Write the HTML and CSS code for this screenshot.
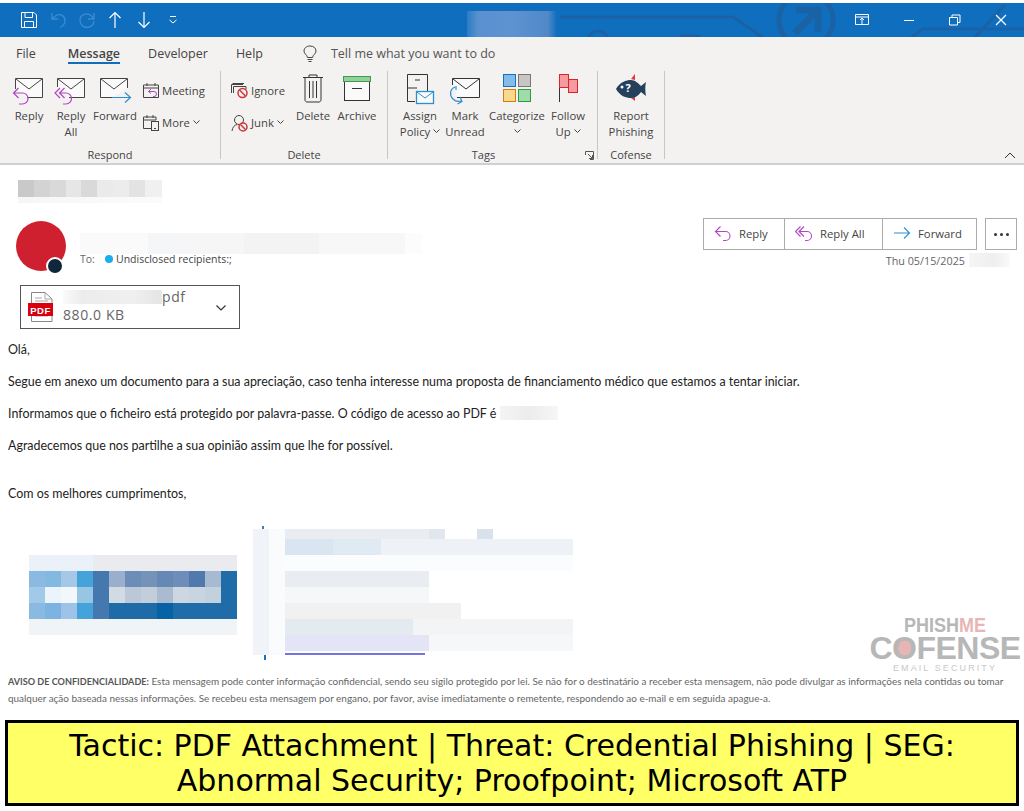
FILE: index.html
```html
<!DOCTYPE html>
<html lang="en">
<head>
    <meta charset="UTF-8">
    <meta name="viewport" content="width=device-width, initial-scale=1.0">
    <title>Message</title>
    <link rel="stylesheet" href="styles.css">
</head>
<body>

<header class="titlebar">
    <svg class="titlebar-art" width="1024" height="34" viewBox="0 0 1024 34" fill="none" stroke="#1a62a6">
        <path d="M560 14H733L765 36" stroke-width="3"/>
        <path d="M680 33H700" stroke-width="3"/>
        <circle cx="806" cy="17" r="27" stroke-width="5"/>
        <path d="M796 7H818V29M816 9L795 30" stroke-width="7"/>
        <path d="M910 36L922 26H1024M975 34L1005 2" stroke-width="3"/>
        <circle cx="598" cy="38" r="10" stroke-width="3"/>
    </svg>
    <div class="qat">
        <svg width="18" height="18" viewBox="0 0 18 18" fill="none" stroke="#fff"><path d="M1.500 1.500H14L16.500 4V16.500H1.500ZM5 1.500V6.500H12.500V1.500M4.500 16.500V10.500H13.500V16.500"/></svg>
        <svg class="qat-undo" width="16" height="18" viewBox="0 0 16 18" fill="none" stroke="#3d8bd0" stroke-width="1.300"><path d="M1 2V8H7M1.500 7.500L5 4.500C9 2 14 5 14 9.500C14 13 12 15 9 16.500"/></svg>
        <svg class="qat-redo" width="18" height="18" viewBox="0 0 18 18" fill="none" stroke="#3d8bd0" stroke-width="1.300"><path d="M16 2V8H10M15.500 7L13 4.500C9 1 2 3.500 2 9.500C2 13.500 5 16.500 9 16.500C13 16.500 16 13.500 16 10"/></svg>
        <svg class="qat-up" width="14" height="18" viewBox="0 0 14 18" fill="none" stroke="#fff" stroke-width="1.200"><path d="M7 17V1.500M1.500 7L7 1.500L12.500 7"/></svg>
        <svg class="qat-down" width="14" height="18" viewBox="0 0 14 18" fill="none" stroke="#fff" stroke-width="1.200"><path d="M7 1V16.500M1.500 11L7 16.500L12.500 11"/></svg>
        <svg class="qat-more" width="10" height="10" viewBox="0 0 10 10" fill="none" stroke="#fff"><path d="M2 1.500H8M1.500 5L5 8L8.500 5"/></svg>
    </div>
    <div class="doc-title"></div>
    <div class="window-controls">
        <svg width="14" height="12" viewBox="0 0 14 12" fill="none" stroke="#fff"><path d="M.5 .5H13.500V10.500H.5ZM.5 3H13.500M7 4V10.500M5 6L7 4L9 6"/></svg>
        <svg width="12" height="12" viewBox="0 0 12 12" fill="none" stroke="#fff"><path d="M1 6.500H11"/></svg>
        <svg width="12" height="12" viewBox="0 0 12 12" fill="none" stroke="#fff"><path d="M.5 3.500H8.500V11H.5ZM3 3.500V1H11V8.500H8.500"/></svg>
        <svg width="12" height="12" viewBox="0 0 12 12" fill="none" stroke="#fff" stroke-width="1.200"><path d="M1 1L11 11M11 1L1 11"/></svg>
    </div>
</header>

<nav class="tabs">
    <span class="tab tab-file">File</span>
    <span class="tab tab-active">Message</span>
    <span class="tab tab-dev">Developer</span>
    <span class="tab tab-help">Help</span>
    <svg class="bulb" width="16" height="18" viewBox="0 0 16 18" fill="none" stroke="#444"><path d="M5.500 12.500C5 9.500 2 9 2 6C2 3 4.500 1 8 1C11.500 1 14 3 14 6C14 9 11 9.500 10.500 12.500ZM5.500 14.500H10.500M6.500 16.500H9.500"/></svg>
    <span class="tell-me">Tell me what you want to do</span>
</nav>

<section class="ribbon">
    <div class="group group-respond">
        <div class="group-body">
            <div class="rb rb-reply">
                <svg width="36" height="36" viewBox="0 0 36 36" fill="none"><path d="M4.500 18V7.500H31.500V26.500H16" fill="#fafafa" stroke="#444"/><path d="M5 8L18 18L31 8" stroke="#444"/><path d="M7.500 17L2.500 22L7.500 27M2.500 22H11.500A5.500 5.500 0 0 1 11.500 33H8" stroke="#b146c2" stroke-width="1.200"/></svg>
                <span>Reply</span>
            </div>
            <div class="rb rb-reply">
                <svg width="36" height="36" viewBox="0 0 36 36" fill="none"><path d="M4.500 16V7.500H31.500V26.500H16" fill="#fafafa" stroke="#444"/><path d="M5 8L18 18L31 8" stroke="#444"/><path d="M7 17L2 22L7 27M11.500 17L6.500 22L11.500 27M6.500 22H13A5.500 5.500 0 0 1 13 33H10" stroke="#b146c2" stroke-width="1.200"/></svg>
                <span>Reply<br>All</span>
            </div>
            <div class="rb rb-forward">
                <svg width="38" height="36" viewBox="0 0 38 36" fill="none"><path d="M31.500 17V7.500H4.500V26.500H16" fill="#fafafa" stroke="#444"/><path d="M5 8L18 18L31 8" stroke="#444"/><path d="M16 26.500H34M29 21.500L34.500 26.500L29 31.500" stroke="#2f8ed0" stroke-width="1.200"/></svg>
                <span>Forward</span>
            </div>
            <div class="small-col small-col-respond">
                <div class="rb-small">
                    <svg width="17" height="17" viewBox="0 0 17 17" fill="none"><path d="M.5 3H15.500V15.500H.5ZM.5 6H15.500M4 1V4M12 1V4" stroke="#444"/><path d="M8 7L5.500 9.500L8 11.500M5.500 9.500H11A2.500 2.500 0 0 1 11 14.500H10" stroke="#b146c2"/></svg>
                    <span>Meeting</span>
                </div>
                <div class="rb-small">
                    <svg width="17" height="17" viewBox="0 0 17 17" fill="none"><path d="M8 14.500H.5V3H13V6M.5 6H13M4 1V4M10 1V4" stroke="#444"/><rect x="8.500" y="7.500" width="7" height="9" fill="#f3f2f1" stroke="#444"/><path d="M11 14.500H13" stroke="#444"/></svg>
                    <span>More <svg class="chev" width="7" height="5" viewBox="0 0 7 5" fill="none"><path d="M.5 .5L3.500 3.500L6.500 .5"/></svg></span>
                </div>
            </div>
        </div>
        <div class="group-label">Respond</div>
    </div>

    <div class="group group-delete">
        <div class="group-body">
            <div class="small-col small-col-delete">
                <div class="rb-small">
                    <svg width="18" height="17" viewBox="0 0 18 17" fill="none"><path d="M.5 11V2.500H12M2.500 11V4.500H15V7" stroke="#444"/><path d="M1.500 1.500H13" stroke="#444"/><circle cx="11.500" cy="11" r="4.500" fill="#f3f2f1" stroke="#d13438" stroke-width="1.500"/><path d="M8.500 8L14.500 14" stroke="#d13438" stroke-width="1.500"/></svg>
                    <span>Ignore</span>
                </div>
                <div class="rb-small">
                    <svg width="18" height="18" viewBox="0 0 18 18" fill="none"><circle cx="8" cy="6" r="4.500" stroke="#444"/><path d="M1 17C1.500 13 3.500 11 6 10.500" stroke="#444"/><circle cx="12" cy="13" r="4" fill="#f3f2f1" stroke="#d13438" stroke-width="1.500"/><path d="M9.500 10.500L14.500 15.500" stroke="#d13438" stroke-width="1.500"/></svg>
                    <span>Junk <svg class="chev" width="7" height="5" viewBox="0 0 7 5" fill="none"><path d="M.5 .5L3.500 3.500L6.500 .5"/></svg></span>
                </div>
            </div>
            <div class="rb rb-delete">
                <svg width="24" height="36" viewBox="0 0 24 36" fill="none" stroke="#333"><path d="M2 6.500H22M8 6.500V4H16V6.500M4 6.500V29C4 30 5 31 6 31H18C19 31 20 30 20 29V6.500M8.500 10V27M12 10V27M15.500 10V27"/></svg>
                <span>Delete</span>
            </div>
            <div class="rb rb-archive">
                <svg width="30" height="36" viewBox="0 0 30 36" fill="none"><rect x="2.500" y="9.500" width="25" height="20" fill="#fafafa" stroke="#333"/><rect x="1.500" y="5.500" width="27" height="5" fill="#92d29a" stroke="#3f9a4f"/><path d="M10 17.500H20" stroke="#333"/></svg>
                <span>Archive</span>
            </div>
        </div>
        <div class="group-label">Delete</div>
    </div>

    <div class="group group-tags">
        <div class="group-body">
            <div class="rb rb-assign">
                <svg width="30" height="36" viewBox="0 0 30 36" fill="none"><path d="M2.500 3.500H22.500V21M2.500 3.500V30.500H10M2.500 17H12M10 9H15" stroke="#333"/><rect x="11.500" y="20.500" width="17" height="12" fill="#fafafa" stroke="#2f8ed0" stroke-width="1.300"/><path d="M12 21L20 27L28 21" stroke="#2f8ed0"/></svg>
                <span>Assign<br>Policy <svg class="chev" width="7" height="5" viewBox="0 0 7 5" fill="none"><path d="M.5 .5L3.500 3.500L6.500 .5"/></svg></span>
            </div>
            <div class="rb rb-mark">
                <svg width="36" height="36" viewBox="0 0 36 36" fill="none"><path d="M5.500 7.500H32.500V26.500H10" fill="#fafafa" stroke="#333"/><path d="M5.500 7.500V14M6 8L19 18L32 8" stroke="#333"/><path d="M8 16C3 18 2 24 6 28C8 30 11 31 14 30M13 26L15 30.500L10.500 33M9 15V19" stroke="#2f8ed0" stroke-width="1.200"/></svg>
                <span>Mark<br>Unread</span>
            </div>
            <div class="rb rb-cat">
                <svg width="30" height="36" viewBox="0 0 30 36" fill="none"><rect x="1.500" y="3.500" width="12" height="12" fill="#83bbe9" stroke="#1a6fc0"/><rect x="16.500" y="3.500" width="12" height="12" fill="#c8c6c4" stroke="#797775"/><rect x="1.500" y="18.500" width="12" height="12" fill="#f9d98b" stroke="#d97c10"/><rect x="16.500" y="18.500" width="12" height="12" fill="#9fdca8" stroke="#2b9a45"/></svg>
                <span>Categorize<br><svg class="chev" width="7" height="5" viewBox="0 0 7 5" fill="none"><path d="M.5 .5L3.500 3.500L6.500 .5"/></svg></span>
            </div>
            <div class="rb rb-follow">
                <svg width="24" height="36" viewBox="0 0 24 36" fill="none"><path d="M3.500 3.500V31" stroke="#333"/><rect x="3.500" y="3.500" width="9" height="13" fill="#f79aa0" stroke="#d9242c"/><rect x="12.500" y="8.500" width="9" height="13" fill="#f79aa0" stroke="#d9242c"/></svg>
                <span>Follow<br>Up <svg class="chev" width="7" height="5" viewBox="0 0 7 5" fill="none"><path d="M.5 .5L3.500 3.500L6.500 .5"/></svg></span>
            </div>
        </div>
        <div class="group-label group-label-tags">Tags</div>
        <svg class="launcher" width="9" height="9" viewBox="0 0 9 9" fill="none" stroke="#555"><path d="M.5 4V.5H8.500V8.500H5M3 3L7.500 7.500M7.500 4V7.500H4"/></svg>
    </div>

    <div class="group group-cofense">
        <div class="group-body">
            <div class="rb rb-report">
                <svg width="36" height="36" viewBox="0 0 36 36">
                    <path d="M18 8L22 3L22 9Z" fill="#e8343c"/>
                    <path d="M18 27L22 30L22 26Z" fill="#e8343c"/>
                    <path d="M3 18C7 11 13 9 18 9C22 9 25 12 28 15L33 11C32 15 32 20 33 25L28 21C25 25 22 27 18 27C13 27 7 25 3 18Z" fill="#25405c"/>
                    <circle cx="9" cy="16" r="1.500" fill="#fff"/>
                    <text class="fish-mark" x="15" y="21">?</text>
                </svg>
                <span>Report<br>Phishing</span>
            </div>
        </div>
        <div class="group-label">Cofense</div>
    </div>

    <svg class="collapse" width="12" height="7" viewBox="0 0 12 7" fill="none" stroke="#333"><path d="M1 6L6 1L11 6"/></svg>
</section>

<main class="message">
    <div class="subject-blur"></div>

    <div class="sender-row">
        <div class="avatar"><span class="presence"></span></div>
        <div class="sender-info">
            <div class="sender-blur"></div>
            <div class="to-line">
                <span class="to-label">To:</span>
                <span class="to-dot"></span>
                <span>Undisclosed recipients:;</span>
            </div>
        </div>
        <div class="actions">
            <div class="action-row">
                <div class="action-group">
                    <span class="action action-reply">
                        <svg width="18" height="18" viewBox="0 0 18 18" fill="none" stroke="#b146c2" stroke-width="1.100"><path d="M6.500 2.500L1.500 7.500L6.500 12.500M1.500 7.500H11.500A4.500 4.500 0 0 1 11.500 16.500H9"/></svg>
                        Reply
                    </span>
                    <span class="action action-replyall">
                        <svg width="18" height="18" viewBox="0 0 18 18" fill="none" stroke="#b146c2" stroke-width="1.100"><path d="M5.500 2.500L.5 7.500L5.500 12.500M9 2.500L4 7.500L9 12.500M4 7.500H12A4.500 4.500 0 0 1 12 16.500H10"/></svg>
                        Reply All
                    </span>
                    <span class="action action-forward">
                        <svg width="18" height="18" viewBox="0 0 18 18" fill="none" stroke="#2f8ed0" stroke-width="1.100"><path d="M1 9H16.500M11 3.500L16.500 9L11 14.500"/></svg>
                        Forward
                    </span>
                </div>
                <span class="more-btn"><i></i><i></i><i></i></span>
            </div>
            <div class="date-line">Thu 05/15/2025 <span class="time-blur"></span></div>
        </div>
    </div>

    <div class="attachment">
        <svg class="pdf-icon" width="26" height="30" viewBox="0 0 26 30" fill="none">
            <path d="M3.500 .5H17L24 7V29.500H3.500Z" fill="#fff" stroke="#8a8886"/>
            <path d="M17 .5V7H24M7 6H14M7 9H20M7 21H20M7 24H20" stroke="#a8a6a4"/>
            <rect y="11" width="25" height="13" fill="#d8000f"/>
            <text class="pdf-mark" x="12.500" y="21.500">PDF</text>
        </svg>
        <div class="attachment-text">
            <div class="attachment-name"><span class="name-blur"></span>pdf</div>
            <div class="attachment-size">880.0 KB</div>
        </div>
        <svg class="attachment-chev" width="10" height="6" viewBox="0 0 10 6" fill="none" stroke="#333" stroke-width="1.200"><path d="M.5 .5L5 5L9.500 .5"/></svg>
    </div>

    <div class="body-text">
        <p>Olá,</p>
        <p>Segue em anexo um documento para a sua apreciação, caso tenha interesse numa proposta de financiamento médico que estamos a tentar iniciar.</p>
        <p>Informamos que o ficheiro está protegido por palavra-passe. O código de acesso ao PDF é <span class="code-blur"></span></p>
        <p>Agradecemos que nos partilhe a sua opinião assim que lhe for possível.</p>
        <p class="closing">Com os melhores cumprimentos,</p>
    </div>

    <div class="signature">
        <svg class="sig-logo" width="208" height="80" viewBox="0 0 208 80" shape-rendering="crispEdges">
            <rect width="208" height="16" fill="#e9ebef"/>
            <rect width="64" height="16" fill="#ebf1f8"/>
            <rect y="16" width="16" height="16" fill="#8abae2"/><rect x="16" y="16" width="16" height="16" fill="#83b8e0"/><rect x="32" y="16" width="16" height="16" fill="#a4c8e5"/><rect x="48" y="16" width="16" height="16" fill="#44a3da"/><rect x="64" y="16" width="16" height="48" fill="#4578ae"/><rect x="80" y="16" width="16" height="16" fill="#9aafcb"/><rect x="96" y="16" width="16" height="16" fill="#6c8db8"/><rect x="112" y="16" width="16" height="16" fill="#7592b9"/><rect x="128" y="16" width="16" height="16" fill="#6588b5"/><rect x="144" y="16" width="16" height="16" fill="#6e8db8"/><rect x="160" y="16" width="16" height="16" fill="#5079ae"/><rect x="176" y="16" width="16" height="16" fill="#a8bad1"/><rect x="192" y="16" width="16" height="48" fill="#1f6ca8"/>
            <rect y="32" width="16" height="16" fill="#a2c9e8"/><rect x="16" y="32" width="16" height="16" fill="#ecf4fb"/><rect x="32" y="32" width="16" height="16" fill="#f3f7fb"/><rect x="48" y="32" width="16" height="16" fill="#98c5e4"/><rect x="80" y="32" width="16" height="16" fill="#d2dae4"/><rect x="96" y="32" width="16" height="16" fill="#bcc8d8"/><rect x="112" y="32" width="16" height="16" fill="#c2ced9"/><rect x="128" y="32" width="16" height="16" fill="#aabbd1"/><rect x="144" y="32" width="16" height="16" fill="#cdd7e1"/><rect x="160" y="32" width="16" height="16" fill="#c8d4df"/><rect x="176" y="32" width="16" height="16" fill="#c3d0dd"/>
            <rect y="48" width="16" height="16" fill="#8abae2"/><rect x="16" y="48" width="16" height="16" fill="#7bb4e0"/><rect x="32" y="48" width="16" height="16" fill="#9dc3e6"/><rect x="48" y="48" width="16" height="16" fill="#44a3da"/><rect x="80" y="48" width="48" height="16" fill="#1f6ba8"/><rect x="128" y="48" width="16" height="16" fill="#0562a4"/><rect x="144" y="48" width="48" height="16" fill="#1f6ca8"/>
            <rect y="64" width="208" height="16" fill="#f1f4f7"/>
        </svg>
        <svg class="sig-card" width="320" height="134" viewBox="0 0 320 134" shape-rendering="crispEdges">
            <rect x="9" y="0" width="2" height="5" fill="#3b7cc0"/>
            <rect x="0" y="3" width="16" height="126" fill="#f0f3f8"/><rect x="16" y="3" width="16" height="126" fill="#fafbfd"/>
            <rect x="32" y="3" width="144" height="10" fill="#e9edf1"/><rect x="176" y="3" width="16" height="10" fill="#e0e7ee"/><rect x="224" y="3" width="16" height="10" fill="#d9e2ea"/>
            <rect x="32" y="13" width="288" height="16" fill="#eef2f6"/><rect x="32" y="13" width="48" height="16" fill="#d9e6f1"/><rect x="80" y="13" width="48" height="16" fill="#dfeaf3"/>
            <rect x="32" y="29" width="288" height="16" fill="#fbfcfd"/>
            <rect x="32" y="45" width="144" height="16" fill="#e9edf1"/>
            <rect x="32" y="61" width="144" height="16" fill="#f5f7f9"/>
            <rect x="32" y="77" width="176" height="16" fill="#f1f1f1"/>
            <rect x="32" y="93" width="288" height="16" fill="#f2f4f6"/><rect x="32" y="93" width="128" height="16" fill="#e3eaf0"/>
            <rect x="32" y="109" width="144" height="16" fill="#e3e5f7"/><rect x="176" y="109" width="144" height="16" fill="#f5f7f9"/>
            <rect x="32" y="127" width="140" height="2" fill="#7473e0"/>
            <rect x="11" y="129" width="2" height="5" fill="#1a6fc0"/>
        </svg>
    </div>

    <p class="disclaimer"><b>AVISO DE CONFIDENCIALIDADE:</b> Esta mensagem pode conter informação confidencial, sendo seu sigilo protegido por lei. Se não for o destinatário a receber esta mensagem, não pode divulgar as informações nela contidas ou tomar qualquer ação baseada nessas informações. Se recebeu esta mensagem por engano, por favor, avise imediatamente o remetente, respondendo ao e-mail e em seguida apague-a.</p>

    <div class="watermark">
        <div class="wm-phishme">PHISH<span>ME</span></div>
        <div class="wm-cofense">C<span class="wm-o">O</span>FENSE</div>
        <div class="wm-sub">EMAIL SECURITY</div>
    </div>
</main>

<footer class="banner">Tactic: PDF Attachment | Threat: Credential Phishing | SEG: Abnormal Security; Proofpoint; Microsoft ATP</footer>

</body>
</html>
```

FILE: styles.css
```css
html, body {
    margin: 0;
    padding: 0;
    background: #fff;
}

body {
    width: 1024px;
    height: 811px;
    overflow: hidden;
    font-family: "Open Sans", "Noto Sans", sans-serif;
    color: #444;
}

svg {
    display: block;
}

/* title bar */
.titlebar {
    position: relative;
    display: flex;
    align-items: center;
    height: 34px;
    margin-top: 3px;
    background: #106ebe;
    overflow: hidden;
}

.titlebar-art {
    position: absolute;
    left: 0;
    top: 0;
}

.qat {
    position: relative;
    display: flex;
    align-items: center;
    margin-left: 20px;
}

.qat-undo { margin-left: 13px; }
.qat-redo { margin-left: 11px; }
.qat-up { margin-left: 12px; }
.qat-down { margin-left: 15px; }
.qat-more { margin-left: 17px; }

.doc-title {
    position: absolute;
    left: 467px;
    top: 8px;
    width: 90px;
    height: 26px;
    background: linear-gradient(to right, #2a7cc4 0, #5a90cf 12%, #5e93d2 50%, #5088c8 90%, #106ebe 100%);
}

.window-controls {
    position: relative;
    display: flex;
    align-items: center;
    margin-left: auto;
    margin-right: 17px;
    gap: 34px;
}

/* tabs */
.tabs {
    display: flex;
    align-items: center;
    height: 33px;
    background: #f3f2f1;
    font-size: 12.500px;
}

.tab {
    position: relative;
    line-height: 33px;
}

.tab-file { margin-left: 16px; }
.tab-dev { margin-left: 28px; }
.tab-help { margin-left: 28px; }

.tab-active {
    margin-left: 32px;
    font-weight: 600;
}

.tab-active::after {
    content: "";
    position: absolute;
    left: 0;
    right: 0;
    bottom: 6px;
    height: 2px;
    background: #106ebe;
}

.bulb {
    margin-left: 39px;
}

.tell-me {
    margin-left: 13px;
    color: #555;
}

/* ribbon */
.ribbon {
    display: flex;
    height: 93px;
    background: #f3f2f1;
    border-bottom: 2px solid #d2d0ce;
    font-size: 11.300px;
    line-height: 16px;
}

.group {
    position: relative;
    box-sizing: border-box;
    height: 88px;
    margin-top: 1px;
    border-right: 1px solid #c8c6c4;
}

.group-respond { width: 221px; }
.group-delete { width: 167px; }
.group-tags { width: 210px; }
.group-cofense { width: 67px; }

.group-body {
    display: flex;
    height: 80px;
}

.group-label {
    height: 8px;
    line-height: 8px;
    text-align: center;
    font-size: 11px;
}

.group-label-tags {
    padding-right: 18px;
}

.launcher {
    position: absolute;
    right: 3px;
    bottom: -1px;
}

.rb {
    display: flex;
    flex-direction: column;
    align-items: center;
    flex: none;
    text-align: center;
}

.rb > svg {
    margin-bottom: 1px;
}

.rb span {
    white-space: nowrap;
}

.rb-reply { width: 42px; }
.rb-reply:first-child { margin-left: 8px; }
.rb-forward { width: 46px; }
.rb-delete { width: 40px; margin-left: 8px; }
.rb-archive { width: 44px; margin-left: 2px; }
.rb-assign { width: 46px; margin-left: 9px; }
.rb-mark { width: 44px; }
.rb-cat { width: 60px; }
.rb-follow { width: 42px; }
.rb-report { width: 66px; }

.small-col {
    display: flex;
    flex-direction: column;
    gap: 15px;
    padding-top: 11px;
}

.small-col-respond { margin-left: 5px; }
.small-col-delete { margin-left: 10px; width: 54px; }

.rb-small {
    display: flex;
    align-items: center;
    gap: 2px;
    height: 17px;
    white-space: nowrap;
}

.chev {
    display: inline-block;
    vertical-align: 2px;
    stroke: #444;
}

.fish-mark {
    font: bold 11px "Open Sans", sans-serif;
    fill: #fff;
    text-anchor: middle;
}

.collapse {
    margin: auto 8px 4px auto;
}

/* message header */
.message {
    position: relative;
    padding-top: 15px;
}

.subject-blur {
    width: 144px;
    height: 23px;
    margin: 0 0 15px 18px;
    background:
        linear-gradient(to right, #c9c9c9 11%, #d3d3d3 11% 22%, #d9d9d9 22% 33%, #e6e6e6 33% 44%, #d9d9d9 44% 55%, #eaeaea 55% 66%, #ececec 66% 77%, #e3e3e3 77% 88%, #f0f0f0 88%) top / 100% 17px no-repeat,
        linear-gradient(to right, #f6f6f6, #fbfbfb) bottom / 100% 6px no-repeat;
}

.sender-row {
    display: flex;
    height: 67px;
    padding: 0 7px 0 16px;
}

.avatar {
    position: relative;
    flex: none;
    width: 50px;
    height: 50px;
    margin-top: 3px;
    border-radius: 50%;
    background: #cf202f;
}

.presence {
    position: absolute;
    left: 30px;
    top: 36px;
    width: 14px;
    height: 14px;
    border: 2px solid #fff;
    border-radius: 50%;
    background: #10263b;
}

.sender-info {
    margin-left: 14px;
    padding-top: 15px;
}

.sender-blur {
    width: 342px;
    height: 21px;
    background: linear-gradient(to right, #fafafa 0 20%, #f5f6f8 20% 30%, #f6f6f6 30% 48%, #f3f3f3 48% 70%, #f7f7f7 70% 95%, #fcfcfc 95%);
}

.to-line {
    display: flex;
    align-items: center;
    height: 12px;
    margin-top: -1px;
    font-size: 10.500px;
    line-height: 12px;
    white-space: nowrap;
}

.to-label {
    color: #666;
    width: 25px;
}

.to-dot {
    width: 8px;
    height: 8px;
    margin-right: 3px;
    border-radius: 50%;
    background: #1aaef0;
}

.actions {
    margin-left: auto;
}

.action-row {
    display: flex;
    gap: 8px;
}

.action-group {
    display: flex;
    box-sizing: border-box;
    height: 32px;
    border: 1px solid #ababab;
    font-size: 11.300px;
}

.action {
    display: flex;
    align-items: center;
    box-sizing: border-box;
    gap: 7px;
    padding: 0 0 2px 10px;
    border-right: 1px solid #ababab;
}

.action-reply { width: 81px; }
.action-replyall { width: 98px; }
.action-forward { width: 93px; border-right: 0; }

.more-btn {
    display: flex;
    align-items: center;
    justify-content: center;
    box-sizing: border-box;
    gap: 3px;
    width: 32px;
    height: 32px;
    border: 1px solid #ababab;
}

.more-btn i {
    width: 3px;
    height: 3px;
    border-radius: 50%;
    background: #333;
}

.date-line {
    display: flex;
    justify-content: flex-end;
    align-items: center;
    gap: 4px;
    height: 14px;
    margin-top: 3px;
    margin-right: 7px;
    font-size: 10.800px;
    color: #666;
    white-space: nowrap;
}

.time-blur {
    width: 41px;
    height: 14px;
    background: linear-gradient(to right, #f6f6f6, #eeeeee 60%, #fafafa);
}

/* attachment */
.attachment {
    position: relative;
    display: flex;
    align-items: center;
    box-sizing: border-box;
    width: 220px;
    height: 44px;
    margin-left: 20px;
    border: 1px solid #555;
    font-size: 14px;
    line-height: 16px;
    color: #666;
}

.pdf-icon {
    margin-left: 7px;
}

.pdf-mark {
    font: bold 9.500px "Liberation Sans", sans-serif;
    letter-spacing: .5px;
    fill: #fff;
    text-anchor: middle;
}

.attachment-text {
    margin-left: 9px;
    letter-spacing: .6px;
}

.attachment-name {
    display: flex;
    align-items: center;
    margin-top: -2px;
    margin-bottom: 2px;
}

.name-blur {
    width: 99px;
    height: 14px;
    background: linear-gradient(to right, #fafafa, #ececec 20%, #f0f0f0 70%, #e6e6e6 95%);
}

.attachment-chev {
    position: absolute;
    right: 13px;
    top: 19px;
}

/* body */
.body-text {
    padding: 13px 8px 0;
    font-family: Lato, "Liberation Sans", sans-serif;
    font-size: 12.440px;
    line-height: 16px;
    color: #222;
}

.body-text p {
    margin: 0 0 16px;
}

.body-text .closing {
    margin-top: 32px;
}

.code-blur {
    display: inline-block;
    width: 58px;
    height: 14px;
    vertical-align: -2px;
    background: linear-gradient(to right, #f4f4f4, #ececec 50%, #f6f6f6);
}

.signature {
    display: flex;
    align-items: flex-start;
    margin-top: 24px;
    padding-left: 29px;
}

.sig-logo {
    margin-top: 29px;
}

.sig-card {
    margin-left: 16px;
}

.disclaimer {
    margin: 13px 8px 0;
    font-family: Lato, "Liberation Sans", sans-serif;
    font-size: 9.940px;
    line-height: 16px;
    color: #666;
}

.disclaimer b {
    font-size: 9.100px;
    color: #555;
}

/* vendor mark sitting over the message */
.watermark {
    position: absolute;
    left: 869px;
    top: 450px;
    width: 152px;
    text-align: center;
    font-family: "Liberation Sans", sans-serif;
    color: #b7b7b7;
}

.wm-phishme {
    height: 20px;
    font-size: 18px;
    line-height: 20px;
    font-weight: bold;
    transform: scaleY(1.150);
}

.wm-phishme span {
    color: #e8b5b5;
}

.wm-cofense {
    height: 27px;
    font-size: 32px;
    line-height: 27px;
    font-weight: bold;
    letter-spacing: -.5px;
}

.wm-o {
    background: radial-gradient(circle, #e8b5b5 0 8px, transparent 8px);
}

.wm-sub {
    font-size: 9px;
    line-height: 10px;
    margin-top: 1px;
    letter-spacing: 2.100px;
    color: #c8c8c8;
}

/* caption banner */
.banner {
    position: absolute;
    left: 5px;
    top: 720px;
    box-sizing: border-box;
    width: 1014px;
    height: 86px;
    padding: 5px 20px;
    border: 3.500px solid #000;
    background: #ffff66;
    font-family: "DejaVu Sans", sans-serif;
    font-size: 30px;
    line-height: 35px;
    text-align: center;
    color: #000;
}
```
